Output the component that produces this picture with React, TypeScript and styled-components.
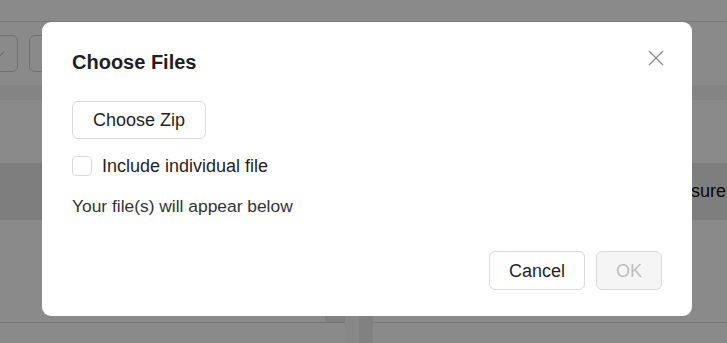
import React from "react";
import styled, { createGlobalStyle } from "styled-components";
import { ChevronDown } from "lucide-react";

const GlobalStyle = createGlobalStyle`
  html, body {
    margin: 0;
    padding: 0;
    width: 100%;
    height: 100%;
    overflow: hidden;
    font-family: "Liberation Sans", Arial, sans-serif;
    background: #ffffff;
  }
`;

const Page = styled.div`
  display: flex;
  flex-direction: column;
  width: 727px;
  height: 343px;
  overflow: hidden;
  background: #ffffff;
`;

const TopBar = styled.div`
  height: 22px;
  border-bottom: 1px solid #e2e2e2;
  box-sizing: border-box;
`;

const Toolbar = styled.div`
  display: flex;
  align-items: center;
  gap: 11px;
  height: 63px;
  overflow: hidden;
`;

const ToolButton = styled.div<{ $width: number; $shift?: number }>`
  display: flex;
  align-items: center;
  justify-content: flex-end;
  padding-right: 10px;
  width: ${(p) => p.$width}px;
  height: 37px;
  margin-left: ${(p) => p.$shift ?? 0}px;
  border: 1px solid #d0d0d0;
  border-radius: 6px;
  box-sizing: border-box;
  color: #999;
`;

const Strip = styled.div<{ $height: number; $bg: string }>`
  height: ${(p) => p.$height}px;
  background: ${(p) => p.$bg};
`;

const HeaderRow = styled.div`
  display: flex;
  align-items: center;
  justify-content: flex-end;
  height: 57px;
  padding-right: 1px;
  background: #e9e9e9;
  font-size: 18px;
  color: #111;
  white-space: nowrap;
`;

const Lower = styled.div`
  display: flex;
  flex: 1;
`;

const Panel = styled.div<{ $width?: number }>`
  ${(p) => (p.$width ? `width: ${p.$width}px;` : "flex: 1;")}
  height: 102px;
  border-bottom: 1px solid #dcdcdc;
  display: flex;
  justify-content: flex-end;
  align-items: flex-end;
`;

const Thumb = styled.div`
  width: 20px;
  height: 6px;
  background: #ededed;
`;

const Gutter = styled.div`
  width: 28px;
  display: flex;
  justify-content: flex-end;
  background: #fbfbfb;
`;

const GutterLine = styled.div`
  width: 14px;
  background: #efefef;
`;

const Overlay = styled.div`
  position: fixed;
  inset: 0;
  background: rgba(0, 0, 0, 0.46);
`;

const Modal = styled.div`
  position: fixed;
  top: 22px;
  left: 42px;
  width: 650px;
  box-sizing: border-box;
  padding: 26px 30px 26px 30px;
  background: #ffffff;
  border-radius: 9px;
  display: flex;
  flex-direction: column;
  color: #1f1f1f;
`;

const TitleRow = styled.div`
  display: flex;
  justify-content: space-between;
  align-items: flex-start;
`;

const Title = styled.h2`
  margin: 0;
  font-size: 20px;
  line-height: 28px;
  font-weight: 600;
  color: #1f1f1f;
`;

const CloseButton = styled.button`
  display: flex;
  align-items: center;
  justify-content: center;
  width: 18px;
  height: 18px;
  padding: 0;
  margin: 1px -3px 0 0;
  border: none;
  background: transparent;
  cursor: pointer;
`;

const Button = styled.button<{ $disabled?: boolean }>`
  height: 39px;
  padding: 0 19px;
  border: 1px solid #d9d9d9;
  border-radius: 6px;
  background: ${(p) => (p.$disabled ? "#f5f5f5" : "#ffffff")};
  color: ${(p) => (p.$disabled ? "#bfbfbf" : "#1f1f1f")};
  font-family: "Liberation Sans", Arial, sans-serif;
  font-size: 18px;
  line-height: 20px;
  box-sizing: border-box;
  cursor: ${(p) => (p.$disabled ? "not-allowed" : "pointer")};
`;

const ZipButton = styled(Button)`
  align-self: flex-start;
  height: 38px;
  padding: 0 20px;
  margin-top: 25px;
`;

const CheckRow = styled.label`
  display: flex;
  align-items: center;
  gap: 10px;
  margin-top: 17px;
  font-size: 18px;
  line-height: 20px;
  color: #1f1f1f;
`;

const Box = styled.span`
  width: 20px;
  height: 20px;
  box-sizing: border-box;
  border: 1px solid #d9d9d9;
  border-radius: 4px;
  background: #fff;
`;

const Hint = styled.p`
  margin: 18px 0 0;
  font-size: 17.4px;
  line-height: 24px;
  color: #333;
`;

const Footer = styled.div`
  display: flex;
  justify-content: flex-end;
  gap: 11px;
  margin-top: 33px;
`;

export default function App() {
  return (
    <>
      <GlobalStyle />
      <Page>
        <TopBar />
        <Toolbar>
          <ToolButton $width={38} $shift={-20}>
            <ChevronDown size={14} strokeWidth={1.5} />
          </ToolButton>
          <ToolButton $width={120} />
        </Toolbar>
        <Strip $height={15} $bg="#f4f4f4" />
        <Strip $height={63} $bg="#ffffff" />
        <HeaderRow>Measure</HeaderRow>
        <Lower>
          <Panel $width={345}>
            <Thumb />
          </Panel>
          <Gutter>
            <GutterLine />
          </Gutter>
          <Panel />
        </Lower>
      </Page>
      <Overlay />
      <Modal role="dialog" aria-labelledby="choose-files-title">
        <TitleRow>
          <Title id="choose-files-title">Choose Files</Title>
          <CloseButton aria-label="Close">
            <svg width="16" height="16" viewBox="0 0 16 16">
              <path
                d="M1 1 L15 15 M15 1 L1 15"
                stroke="#8c8c8c"
                strokeWidth="1.4"
                fill="none"
              />
            </svg>
          </CloseButton>
        </TitleRow>
        <ZipButton>Choose Zip</ZipButton>
        <CheckRow>
          <Box />
          Include individual file
        </CheckRow>
        <Hint>Your file(s) will appear below</Hint>
        <Footer>
          <Button>Cancel</Button>
          <Button $disabled>OK</Button>
        </Footer>
      </Modal>
    </>
  );
}
